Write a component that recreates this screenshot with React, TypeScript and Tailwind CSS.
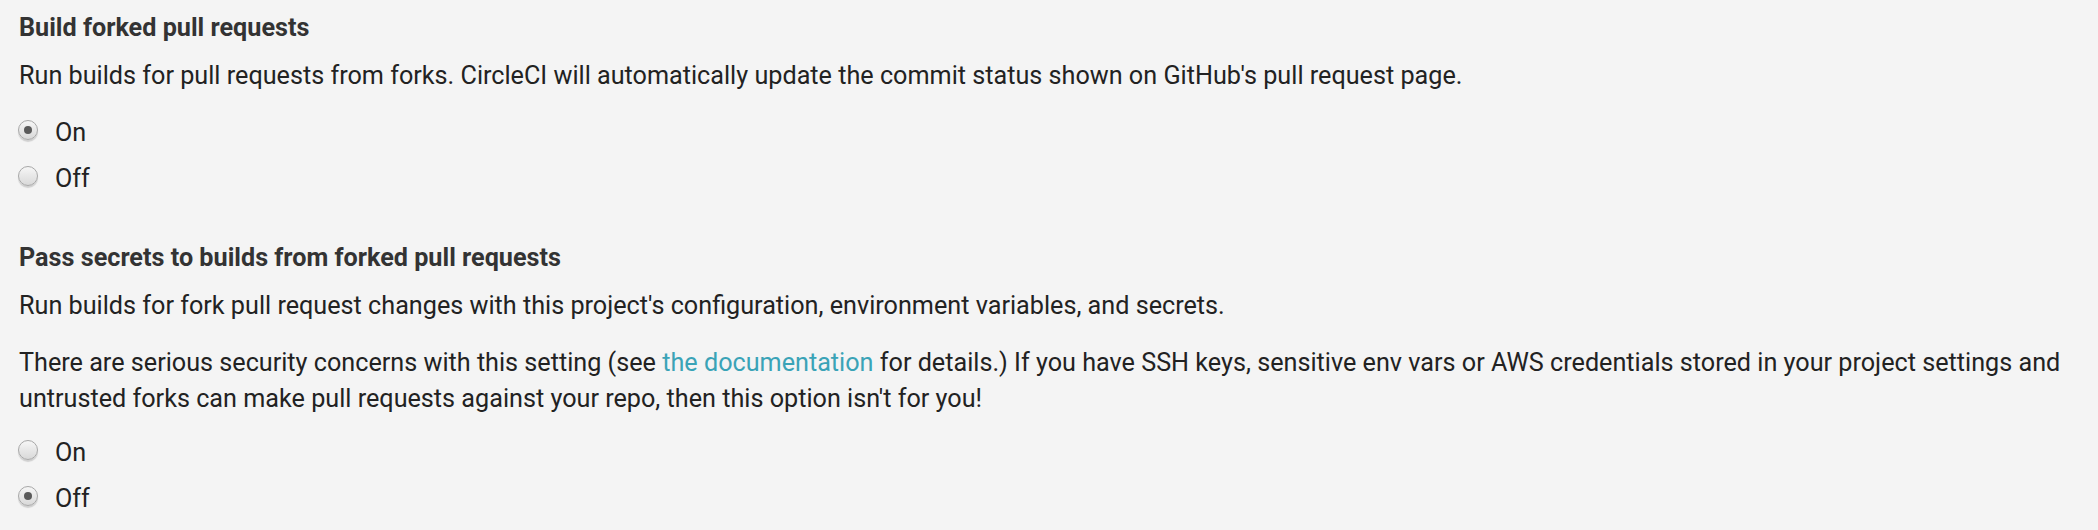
import React from "react";

function Radio({ checked, label }: { checked?: boolean; label: string }) {
  return (
    <label className="flex items-center h-[36px]">
      <span className="relative w-[20px] h-[20px] -mt-[6px] rounded-full border border-[#a8a8a8] bg-gradient-to-b from-[#f6f6f6] to-[#d9d9d9] shadow-[0_2px_1px_rgba(0,0,0,0.15)] flex items-center justify-center shrink-0 ml-[-1px]">
        {checked && <span className="w-[8px] h-[8px] rounded-full bg-[#5a5a5a]" />}
      </span>
      <span className="ml-[17px]">{label}</span>
    </label>
  );
}

export default function App() {
  return (
    <div
      className="min-h-[530px] bg-[#f4f4f4] text-[#222] text-[25.2px] leading-[36px] px-[19px] pt-[10px]"
      style={{ fontFamily: "Roboto, 'Noto Sans', sans-serif" }}
    >
      <h3 className="font-bold text-[#333]">Build forked pull requests</h3>
      <p className="mt-[12px]">
        Run builds for pull requests from forks. CircleCI will automatically update the commit status shown on GitHub's pull request page.
      </p>
      <div className="mt-[21px] flex flex-col gap-[10px]">
        <Radio checked label="On" />
        <Radio label="Off" />
      </div>
      <h3 className="mt-[43px] font-bold text-[#333]">Pass secrets to builds from forked pull requests</h3>
      <p className="mt-[12px]">
        Run builds for fork pull request changes with this project's configuration, environment variables, and secrets.
      </p>
      <p className="mt-[21px]">
        There are serious security concerns with this setting (see{" "}
        <a className="text-[#3aa3b7]">the documentation</a> for details.) If you have SSH keys, sensitive env vars or AWS credentials stored in your project settings and untrusted forks can make pull requests against your repo, then this option isn't for you!
      </p>
      <div className="mt-[18px] flex flex-col gap-[10px]">
        <Radio label="On" />
        <Radio checked label="Off" />
      </div>
    </div>
  );
}
